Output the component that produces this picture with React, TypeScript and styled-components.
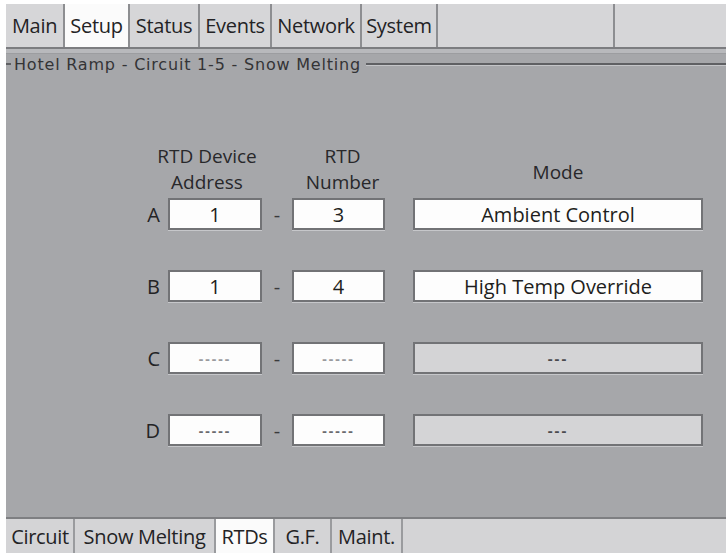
import React from 'react';
import styled, { createGlobalStyle } from 'styled-components';

const GlobalStyle = createGlobalStyle`
  html, body {
    margin: 0;
    padding: 0;
    background: #ffffff;
  }
  body {
    font-family: 'Open Sans', 'DejaVu Sans', sans-serif;
    color: #232325;
  }
`;

const topTabs = [
  { label: 'Main', w: 59 },
  { label: 'Setup', w: 65, active: true },
  { label: 'Status', w: 70 },
  { label: 'Events', w: 72 },
  { label: 'Network', w: 90 },
  { label: 'System', w: 76 },
  { label: '', w: 177 },
];

const bottomTabs = [
  { label: 'Circuit', w: 68 },
  { label: 'Snow Melting', w: 141 },
  { label: 'RTDs', w: 59, active: true },
  { label: 'G.F.', w: 57 },
  { label: 'Maint.', w: 71 },
];

type Rtd = { id: string; address: string; number: string; mode: string };

const rtds: Rtd[] = [
  { id: 'A', address: '1', number: '3', mode: 'Ambient Control' },
  { id: 'B', address: '1', number: '4', mode: 'High Temp Override' },
  { id: 'C', address: '', number: '', mode: '' },
  { id: 'D', address: '', number: '', mode: '' },
];

const App = () => {
  return (
    <>
      <GlobalStyle />
      <Screen>
        <TopBar>
          {topTabs.map((t, i) => (
            <TopTab key={i} $w={t.w} $active={!!t.active}>
              {t.label}
            </TopTab>
          ))}
          <TopTab $w={0} $grow />
        </TopBar>
        <Band />
        <GroupTitle>
          <TitleLead />
          <TitleText>Hotel Ramp - Circuit 1-5 - Snow Melting</TitleText>
          <TitleLine />
        </GroupTitle>

        <FormHeader>
          <span />
          <HeadCell $shift={16}>
            RTD Device
            <br />
            Address
          </HeadCell>
          <span />
          <HeadCell $shift={-8}>
            RTD
            <br />
            Number
          </HeadCell>
          <span />
          <ModeHead>Mode</ModeHead>
        </FormHeader>

        <FormRows>
          {rtds.map((r) => {
            const empty = r.address === '';
            return (
              <React.Fragment key={r.id}>
                <RowLabel>{r.id}</RowLabel>
                <ValueBox>
                  {empty ? <Placeholder $dark={r.id === 'D'}>-----</Placeholder> : r.address}
                </ValueBox>
                <Dash>-</Dash>
                <ValueBox>
                  {empty ? <Placeholder $dark={r.id === 'D'}>-----</Placeholder> : r.number}
                </ValueBox>
                <span />
                <ModeBox $disabled={empty}>
                  {empty ? <ModeEmpty>---</ModeEmpty> : r.mode}
                </ModeBox>
              </React.Fragment>
            );
          })}
        </FormRows>

        <Spacer />

        <BottomBar>
          {bottomTabs.map((t) => (
            <BottomTab key={t.label} $w={t.w} $active={!!t.active}>
              {t.label}
            </BottomTab>
          ))}
        </BottomBar>
      </Screen>
    </>
  );
};

export default App;

const Screen = styled.div`
  width: 720px;
  height: 549px;
  margin: 4px 0 0 6px;
  background: #a6a7aa;
  display: flex;
  flex-direction: column;
  overflow: hidden;
`;

const TopBar = styled.div`
  height: 43px;
  display: flex;
  background: #d6d6d8;
  border-bottom: 2px solid #7c7d80;
  flex-shrink: 0;
`;

const TopTab = styled.div<{ $w: number; $active?: boolean; $grow?: boolean }>`
  width: ${(p) => p.$w}px;
  flex: ${(p) => (p.$grow ? 1 : 'none')};
  box-sizing: border-box;
  border-right: ${(p) => (p.$grow ? 'none' : '2px solid #8d8e91')};
  background: ${(p) => (p.$active ? '#fbfbfb' : '#d6d6d8')};
  display: flex;
  align-items: center;
  justify-content: center;
  font-size: 20px;
  letter-spacing: -0.3px;
  color: #232325;
`;

const Band = styled.div`
  height: 4px;
  background: #b8b9bc;
  border-bottom: 1px solid #9c9da0;
  flex-shrink: 0;
`;

const GroupTitle = styled.div`
  height: 20px;
  display: flex;
  align-items: center;
  flex-shrink: 0;
`;

const TitleLead = styled.div`
  width: 5px;
  height: 2px;
  background: #5f6063;
`;

const TitleText = styled.div`
  font-family: 'DejaVu Sans', sans-serif;
  font-size: 16px;
  letter-spacing: 0.8px;
  padding: 0 5px 0 3px;
  color: #343436;
  white-space: nowrap;
`;

const TitleLine = styled.div`
  flex: 1;
  height: 2px;
  background: #5f6063;
  border-bottom: 1px solid #c4c5c8;
`;

const columns = '28px 94px 30px 93px 28px 290px';

const FormHeader = styled.div`
  display: grid;
  grid-template-columns: ${columns};
  margin: 69px 0 0 134px;
  height: 52px;
  align-items: center;
`;

const HeadCell = styled.div<{ $shift: number }>`
  font-size: 19px;
  line-height: 26px;
  text-align: center;
  white-space: nowrap;
  justify-self: center;
  margin-right: ${(p) => p.$shift}px;
  color: #28282a;
`;

const ModeHead = styled.div`
  font-size: 19px;
  text-align: center;
  padding-top: 6px;
  color: #28282a;
`;

const FormRows = styled.div`
  display: grid;
  grid-template-columns: ${columns};
  grid-auto-rows: 32px;
  row-gap: 40px;
  margin: 3px 0 0 134px;
  align-items: center;
`;

const RowLabel = styled.div`
  font-size: 20px;
  text-align: right;
  padding-right: 8px;
  color: #232325;
`;

const ValueBox = styled.div`
  height: 32px;
  box-sizing: border-box;
  background: #fdfdfd;
  border: 2px solid #727376;
  box-shadow: 0 1px 0 #c6c7ca;
  display: flex;
  align-items: center;
  justify-content: center;
  font-size: 20px;
  color: #1e1e20;
`;

const Placeholder = styled.span<{ $dark?: boolean }>`
  font-size: 14px;
  font-weight: 700;
  letter-spacing: 2px;
  color: ${(p) => (p.$dark ? '#6a6a6e' : '#9a9a9e')};
`;

const Dash = styled.div`
  font-size: 20px;
  text-align: center;
  color: #3a3a3c;
`;

const ModeBox = styled.div<{ $disabled?: boolean }>`
  height: 32px;
  box-sizing: border-box;
  background: ${(p) => (p.$disabled ? '#d4d4d6' : '#fdfdfd')};
  border: 2px solid #727376;
  box-shadow: 0 1px 0 #c6c7ca;
  display: flex;
  align-items: center;
  justify-content: center;
  font-size: 20px;
  color: #1e1e20;
`;

const ModeEmpty = styled.span`
  font-size: 15px;
  font-weight: 700;
  letter-spacing: 2px;
  color: #4a4a4e;
`;

const Spacer = styled.div`
  flex: 1;
`;

const BottomBar = styled.div`
  height: 34px;
  flex-shrink: 0;
  display: flex;
  background: #d4d4d6;
  border-top: 2px solid #7e7f82;
  padding-left: 1px;
`;

const BottomTab = styled.div<{ $w: number; $active?: boolean }>`
  width: ${(p) => p.$w}px;
  box-sizing: border-box;
  border-right: 2px solid #9a9b9e;
  background: ${(p) => (p.$active ? '#fbfbfb' : '#d4d4d6')};
  display: flex;
  justify-content: center;
  padding-top: 4px;
  font-size: 20px;
  letter-spacing: -0.3px;
  white-space: nowrap;
  overflow: hidden;
  color: #232325;
`;
